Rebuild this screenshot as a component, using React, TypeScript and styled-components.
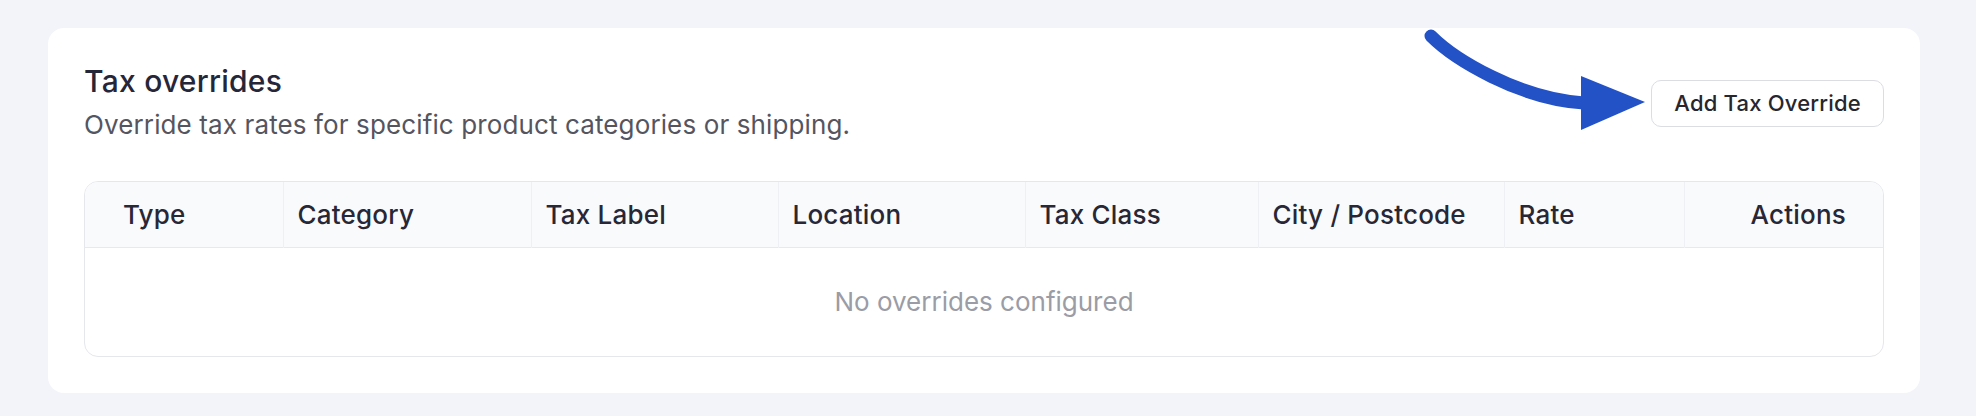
import React from "react";
import styled, { createGlobalStyle } from "styled-components";

const GlobalStyle = createGlobalStyle`
  html, body {
    margin: 0;
    padding: 0;
    background: #f3f4fa;
    font-family: Inter, "Noto Sans", "Liberation Sans", sans-serif;
  }
  * { box-sizing: border-box; }
`;

const Page = styled.div`
  padding: 28px 56px 24px 48px;
`;

const Card = styled.section`
  background: #ffffff;
  border-radius: 16px;
  padding: 35px 36px 36px 36px;
`;

const HeaderRow = styled.div`
  display: flex;
  align-items: center;
  justify-content: space-between;
  margin-bottom: 38px;
`;

const TitleBlock = styled.div`
  display: flex;
  flex-direction: column;
  gap: 8px;
`;

const Title = styled.h2`
  margin: 0;
  font-size: 30px;
  line-height: 36px;
  font-weight: 500;
  letter-spacing: 0.25px;
  color: #262639;
`;

const Subtitle = styled.p`
  margin: 0;
  font-size: 26px;
  line-height: 36px;
  font-weight: 400;
  letter-spacing: 0.12px;
  color: #55555f;
`;

const ActionArea = styled.div`
  position: relative;
  display: flex;
  align-items: center;
`;

const Pointer = styled.svg`
  position: absolute;
  left: -230px;
  top: -60px;
  width: 230px;
  height: 120px;
  overflow: visible;
  pointer-events: none;
`;

const Button = styled.button`
  height: 47px;
  padding: 0 22px;
  border: 1px solid #dcdde3;
  border-radius: 10px;
  background: #ffffff;
  font-family: inherit;
  font-size: 22px;
  font-weight: 500;
  letter-spacing: 0.2px;
  color: #26262f;
  cursor: pointer;
`;

const TableWrap = styled.div`
  border: 1px solid #e6e7ec;
  border-radius: 14px;
  overflow: hidden;
`;

const Table = styled.table`
  width: 100%;
  border-collapse: collapse;
  table-layout: fixed;
`;

const Col = styled.col<{ $w?: number }>`
  width: ${(p) => (p.$w ? `${p.$w}px` : "auto")};
`;

const HeadRow = styled.tr`
  background: #f9fafb;
  border-bottom: 1px solid #e8e9ee;
`;

const HeadCell = styled.th<{ $first?: boolean; $last?: boolean }>`
  height: 65px;
  padding: 0 ${(p) => (p.$last ? "37px" : "14px")} 0
    ${(p) => (p.$first ? "38px" : "14px")};
  border-left: ${(p) => (p.$first ? "none" : "1px solid #eef0f3")};
  text-align: ${(p) => (p.$last ? "right" : "left")};
  font-size: 26px;
  font-weight: 500;
  letter-spacing: 0.2px;
  color: #272736;
  white-space: nowrap;
`;

const EmptyCell = styled.td`
  height: 109px;
  text-align: center;
  font-size: 26px;
  color: #9a9ca6;
`;

const columns: { label: string; width?: number }[] = [
  { label: "Type", width: 198 },
  { label: "Category", width: 248 },
  { label: "Tax Label", width: 247 },
  { label: "Location", width: 247 },
  { label: "Tax Class", width: 233 },
  { label: "City / Postcode", width: 246 },
  { label: "Rate", width: 180 },
  { label: "Actions" },
];

export default function App() {
  return (
    <>
      <GlobalStyle />
      <Page>
        <Card>
          <HeaderRow>
            <TitleBlock>
              <Title>Tax overrides</Title>
              <Subtitle>
                Override tax rates for specific product categories or shipping.
              </Subtitle>
            </TitleBlock>
            <ActionArea>
              <Pointer viewBox="0 0 230 120" aria-hidden="true">
                {/* curved shaft sweeping down into the button */}
                <path
                  d="M 10 16 C 33 39, 98 79, 163 83"
                  fill="none"
                  stroke="#2351c6"
                  strokeWidth="13"
                  strokeLinecap="round"
                />
                <polygon points="160,56 224,82 160,110" fill="#2351c6" />
              </Pointer>
              <Button type="button">Add Tax Override</Button>
            </ActionArea>
          </HeaderRow>
          <TableWrap>
            <Table>
              <colgroup>
                {columns.map((c) => (
                  <Col key={c.label} $w={c.width} />
                ))}
              </colgroup>
              <thead>
                <HeadRow>
                  {columns.map((c, i) => (
                    <HeadCell
                      key={c.label}
                      $first={i === 0}
                      $last={i === columns.length - 1}
                    >
                      {c.label}
                    </HeadCell>
                  ))}
                </HeadRow>
              </thead>
              <tbody>
                <tr>
                  <EmptyCell colSpan={columns.length}>
                    No overrides configured
                  </EmptyCell>
                </tr>
              </tbody>
            </Table>
          </TableWrap>
        </Card>
      </Page>
    </>
  );
}
